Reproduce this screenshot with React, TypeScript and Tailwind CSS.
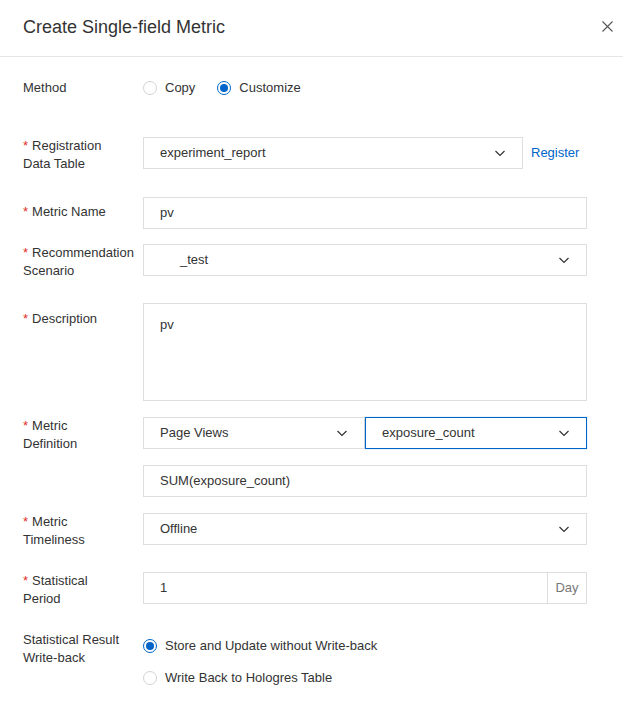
import React from "react";

const Chevron = () => (
  <svg width="12" height="12" viewBox="0 0 12 12" fill="none" className="shrink-0">
    <path d="M1.5 4 L6 8.5 L10.5 4" stroke="#333" strokeWidth="1.2" />
  </svg>
);

const Label = ({ req = true, children, pt = "pt-0" }: { req?: boolean; children: React.ReactNode; pt?: string }) => (
  <div className={`w-[120px] shrink-0 leading-[18px] text-[#333] ${pt}`}>
    {req && <span className="text-[#e02e24] mr-[4px]">*</span>}
    {children}
  </div>
);

const Select = ({ value, className = "", active = false }: { value: React.ReactNode; className?: string; active?: boolean }) => (
  <div
    className={`h-[32px] flex items-center justify-between pl-[16px] pr-[16px] bg-white border ${
      active ? "border-[#0064c8] shadow-[0_0_0_1px_rgba(0,100,200,0.08)]" : "border-[#dedede]"
    } ${className}`}
  >
    <span className="text-[#333]">{value}</span>
    <Chevron />
  </div>
);

const Input = ({ value, className = "" }: { value: string; className?: string }) => (
  <div className={`h-[32px] flex items-center pl-[16px] border border-[#dedede] bg-white text-[#333] ${className}`}>
    {value}
  </div>
);

const Radio = ({ checked, label }: { checked?: boolean; label: string }) => (
  <label className="flex items-center gap-[8px] text-[#333]">
    <span
      className={`w-[14px] h-[14px] rounded-full border flex items-center justify-center ${
        checked ? "border-[#0064c8]" : "border-[#d4d4d4]"
      }`}
    >
      {checked && <span className="w-[8px] h-[8px] rounded-full bg-[#0064c8]" />}
    </span>
    <span>{label}</span>
  </label>
);

export default function App() {
  return (
    <div
      className="w-[623px] h-[725px] bg-white text-[13px] overflow-hidden"
      style={{ fontFamily: '"Liberation Sans", Arial, sans-serif' }}
    >
      <div className="h-[57px] border-b border-[#e5e5e5] flex items-center justify-between pl-[23px] pr-[10px] pb-[2px]">
        <h1 className="text-[18px] text-[#333] leading-[24px]">Create Single-field Metric</h1>
        <svg width="11" height="11" viewBox="0 0 11 11" className="mb-[2px]">
          <path d="M0.5 0.5 L10.5 10.5 M10.5 0.5 L0.5 10.5" stroke="#555" strokeWidth="1.1" />
        </svg>
      </div>

      <div className="pl-[23px] pr-[36px] flex flex-col">
        <div className="mt-[15px] h-[32px] flex items-center">
          <Label req={false}>Method</Label>
          <div className="flex items-center gap-[22px]">
            <Radio label="Copy" />
            <Radio checked label="Customize" />
          </div>
        </div>

        <div className="mt-[33px] flex">
          <Label>
            Registration
            <br />
            Data Table
          </Label>
          <Select value="experiment_report" className="w-[380px]" />
          <a className="ml-[8px] mt-[7px] leading-[18px] text-[#0064c8]">Register</a>
        </div>

        <div className="mt-[24px] flex">
          <Label pt="pt-[6px]">Metric Name</Label>
          <Input value="pv" className="flex-1" />
        </div>

        <div className="mt-[15px] flex">
          <Label>
            Recommendation
            <br />
            Scenario
          </Label>
          <Select value={<span className="ml-[20px]">_test</span>} className="flex-1" />
        </div>

        <div className="mt-[23px] flex">
          <Label pt="pt-[7px]">Description</Label>
          <div className="flex-1 h-[98px] border border-[#dedede] pl-[16px] pt-[12px] leading-[18px] text-[#333]">pv</div>
        </div>

        <div className="mt-[16px] flex">
          <Label>
            Metric
            <br />
            Definition
          </Label>
          <div className="flex-1 flex flex-col gap-[16px]">
            <div className="flex">
              <Select value="Page Views" className="w-[222px]" />
              <Select value="exposure_count" active className="flex-1" />
            </div>
            <Input value="SUM(exposure_count)" />
          </div>
        </div>

        <div className="mt-[16px] flex">
          <Label>
            Metric
            <br />
            Timeliness
          </Label>
          <Select value="Offline" className="flex-1" />
        </div>

        <div className="mt-[23px] flex">
          <Label>
            Statistical
            <br />
            Period
          </Label>
          <div className="flex-1 h-[32px] flex border border-[#dedede]">
            <div className="flex-1 flex items-center pl-[16px] text-[#333]">1</div>
            <div className="w-[39px] border-l border-[#dedede] flex items-center justify-center text-[#777]">Day</div>
          </div>
        </div>

        <div className="mt-[23px] flex">
          <Label req={false}>
            Statistical Result
            <br />
            Write-back
          </Label>
          <div className="flex flex-col -mt-[1px]">
            <div className="h-[32px] flex items-center">
              <Radio checked label="Store and Update without Write-back" />
            </div>
            <div className="h-[32px] flex items-center">
              <Radio label="Write Back to Hologres Table" />
            </div>
          </div>
        </div>
      </div>
    </div>
  );
}
